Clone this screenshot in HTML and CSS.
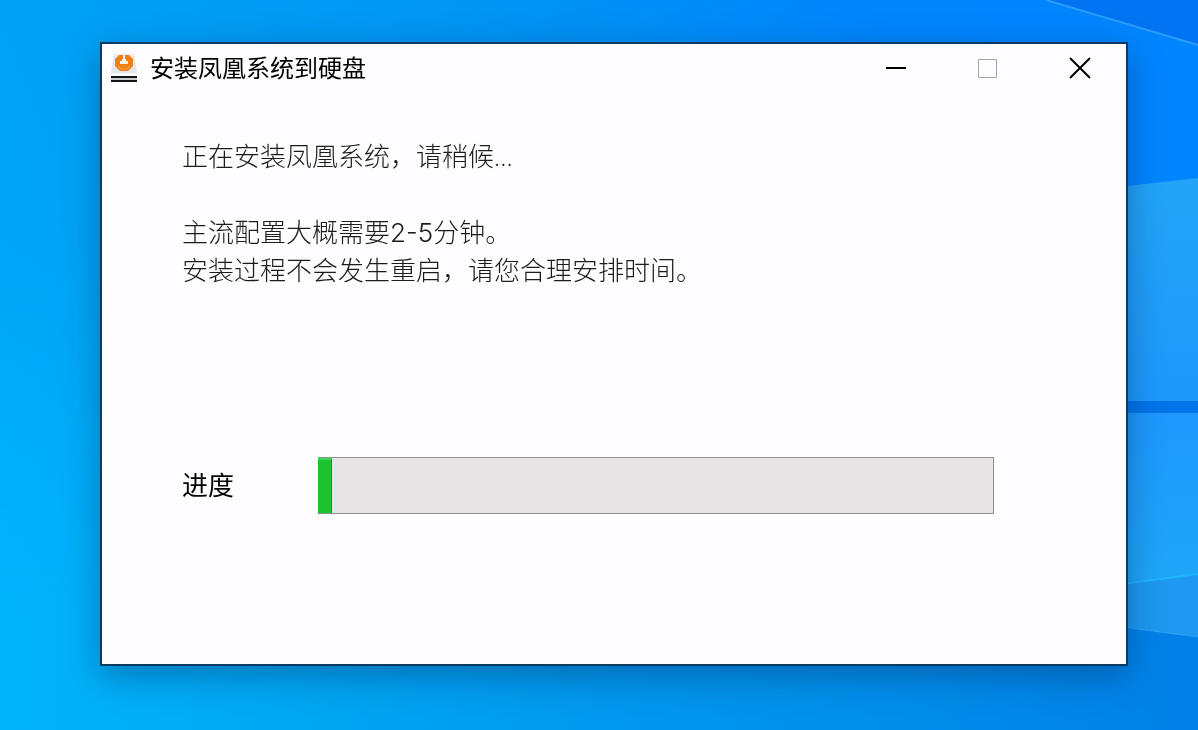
FILE: index.html
```
<!DOCTYPE html>
<html lang="zh-CN">
<head>
    <meta charset="UTF-8">
    <meta name="viewport" content="width=device-width, initial-scale=1.0">
    <title>安装凤凰系统到硬盘</title>
    <link rel="stylesheet" href="styles.css">
</head>
<body>
    <svg class="wallpaper" viewBox="0 0 1198 730" preserveAspectRatio="none" aria-hidden="true">
        <defs>
            <linearGradient id="sky" x1="0" y1="0.45" x2="1" y2="0.2">
                <stop offset="0" stop-color="#00a6f7"/>
                <stop offset="0.45" stop-color="#0096f2"/>
                <stop offset="0.8" stop-color="#0085fd"/>
                <stop offset="1" stop-color="#0085ff"/>
            </linearGradient>
            <linearGradient id="ground" x1="0" y1="0" x2="1" y2="0">
                <stop offset="0" stop-color="#00b4fc"/>
                <stop offset="0.25" stop-color="#00a7f3"/>
                <stop offset="0.5" stop-color="#0098ee"/>
                <stop offset="0.75" stop-color="#008eea"/>
                <stop offset="1" stop-color="#007fe6"/>
            </linearGradient>
            <linearGradient id="fade" x1="0" y1="0" x2="0" y2="1">
                <stop offset="0.3" stop-color="#fff" stop-opacity="0"/>
                <stop offset="0.85" stop-color="#fff"/>
            </linearGradient>
            <mask id="lower"><rect width="1198" height="730" fill="url(#fade)"/></mask>
            <linearGradient id="pane" x1="0" y1="0" x2="0" y2="1">
                <stop offset="0" stop-color="#22a4f7"/>
                <stop offset="1" stop-color="#1e98fb"/>
            </linearGradient>
            <linearGradient id="paneLow" x1="0" y1="0" x2="0" y2="1">
                <stop offset="0" stop-color="#1e98fd"/>
                <stop offset="1" stop-color="#1ea6f8"/>
            </linearGradient>
        </defs>
        <rect width="1198" height="730" fill="url(#sky)"/>
        <rect width="1198" height="730" fill="url(#ground)" mask="url(#lower)"/>
        <path d="M1046 0 1198 45V0z" fill="#0074f2"/>
        <path d="M1046 0 1198 45" stroke="#2b9dfb" stroke-width="2"/>
        <!-- window panes -->
        <path d="M1100 189 1198 178V402H1100z" fill="url(#pane)"/>
        <path d="M1100 401H1198V413H1100z" fill="#0074e8"/>
        <path d="M1100 413H1198V574L1100 587z" fill="url(#paneLow)"/>
        <path d="M1100 587 1198 574V637L1100 624z" fill="#1e98f1"/>
        <path d="M1100 587 1198 574" stroke="#1fb4fb" stroke-width="2"/>
        <path d="M1100 624 1198 637" stroke="#2ba2f5"/>
    </svg>

    <main class="window">
        <header class="titlebar">
            <svg class="app-icon" viewBox="0 0 28 30" aria-hidden="true">
                <path d="M4 1H24L27 21H1z" fill="#e6e4e6"/>
                <path d="M5 2H23L24 14H4z" fill="#f1eff0"/>
                <path d="M1 20H27V23H1z" fill="#fbfafa"/>
                <path d="M1 23H27V25H1zM1 27H27V29H1z" fill="#101318"/>
                <path d="M1 25H27V27H1z" fill="#c9ced3"/>
                <path d="M9 2H13V6H15V2H19L23 6V13L18 18H10L5 13V6z" fill="#ef7f17"/>
                <path d="M12 6H16V8H18V11H10V8H12z" fill="#fff3e6"/>
                <path d="M8 13 11 16H17L20 13" fill="none" stroke="#ffa84a"/>
            </svg>
            <h1 class="title">安装凤凰系统到硬盘</h1>
            <div class="controls">
                <button type="button" aria-label="最小化">
                    <svg viewBox="0 0 22 22"><path d="M1 11H21" stroke-width="2"/></svg>
                </button>
                <button type="button" aria-label="最大化" disabled>
                    <svg viewBox="0 0 22 22"><path d="M1.500 2.500H19.500V20.500H1.500z"/></svg>
                </button>
                <button type="button" aria-label="关闭">
                    <svg viewBox="0 0 22 22"><path d="M1 1 21 21M21 1 1 21" stroke-width="2"/></svg>
                </button>
            </div>
        </header>
        <section class="content">
            <p>正在安装凤凰系统，请稍候...</p>
            <p>主流配置大概需要<span class="minutes">2-5</span>分钟。<br>安装过程不会发生重启，请您合理安排时间。</p>
            <div class="progress-row">
                <label for="progress">进度</label>
                <progress id="progress" value="2" max="100"></progress>
            </div>
        </section>
    </main>
</body>
</html>
```
FILE: styles.css
```
* {
    box-sizing: border-box;
}
body {
    margin: 0;
    padding: 42px 70px 64px 100px;
    min-height: 100vh;
    font-family: "Open Sans", "Noto Sans CJK SC", sans-serif;
    background-color: #0096f2;
}
.wallpaper {
    position: fixed;
    top: 0;
    left: 0;
    width: 100%;
    height: 100%;
    z-index: -1;
}
.window {
    border: 2px solid #0b3b62;
    background-color: #fdfcff;
    box-shadow: 0 10px 32px rgba(0, 40, 90, 0.4);
}
.titlebar {
    display: flex;
    align-items: center;
    height: 48px;
    padding-left: 8px;
}
.app-icon {
    width: 28px;
    height: 30px;
}
.title {
    flex: 1;
    margin: 0 0 0 12px;
    font-size: 24px;
    line-height: 46px;
    font-weight: 400;
    color: #000;
}
.controls {
    display: flex;
}
.controls button {
    display: flex;
    align-items: center;
    justify-content: center;
    width: 92px;
    height: 48px;
    padding: 0;
    border: none;
    background: none;
}
.controls svg {
    width: 22px;
    height: 22px;
    fill: none;
    stroke: #000;
}
.controls button:disabled svg {
    stroke: #a5a5a8;
}
.content {
    padding: 45px 132px 150px 80px;
    font-size: 26px;
    line-height: 38px;
    font-weight: 300;
    color: #1c1c1c;
}
.content p {
    margin: 0 0 38px;
}
.minutes {
    font-family: Inter, sans-serif;
    line-height: 1;
}
.progress-row {
    display: flex;
    align-items: center;
    margin-top: 168px;
}
.progress-row label {
    width: 136px;
    padding-bottom: 2px;
    font-weight: 400;
    color: #000;
}
progress {
    flex: 1;
    height: 57px;
    border: 1px solid #8f8e92;
    border-left: none;
    background-color: #e6e4e5;
    appearance: none;
    -webkit-appearance: none;
}
progress::-webkit-progress-bar {
    background-color: #e6e4e5;
}
progress::-webkit-progress-value {
    background-color: #1bc42f;
    border-top: 2px solid #45d655;
    border-right: 1px solid #28883a;
}
```
